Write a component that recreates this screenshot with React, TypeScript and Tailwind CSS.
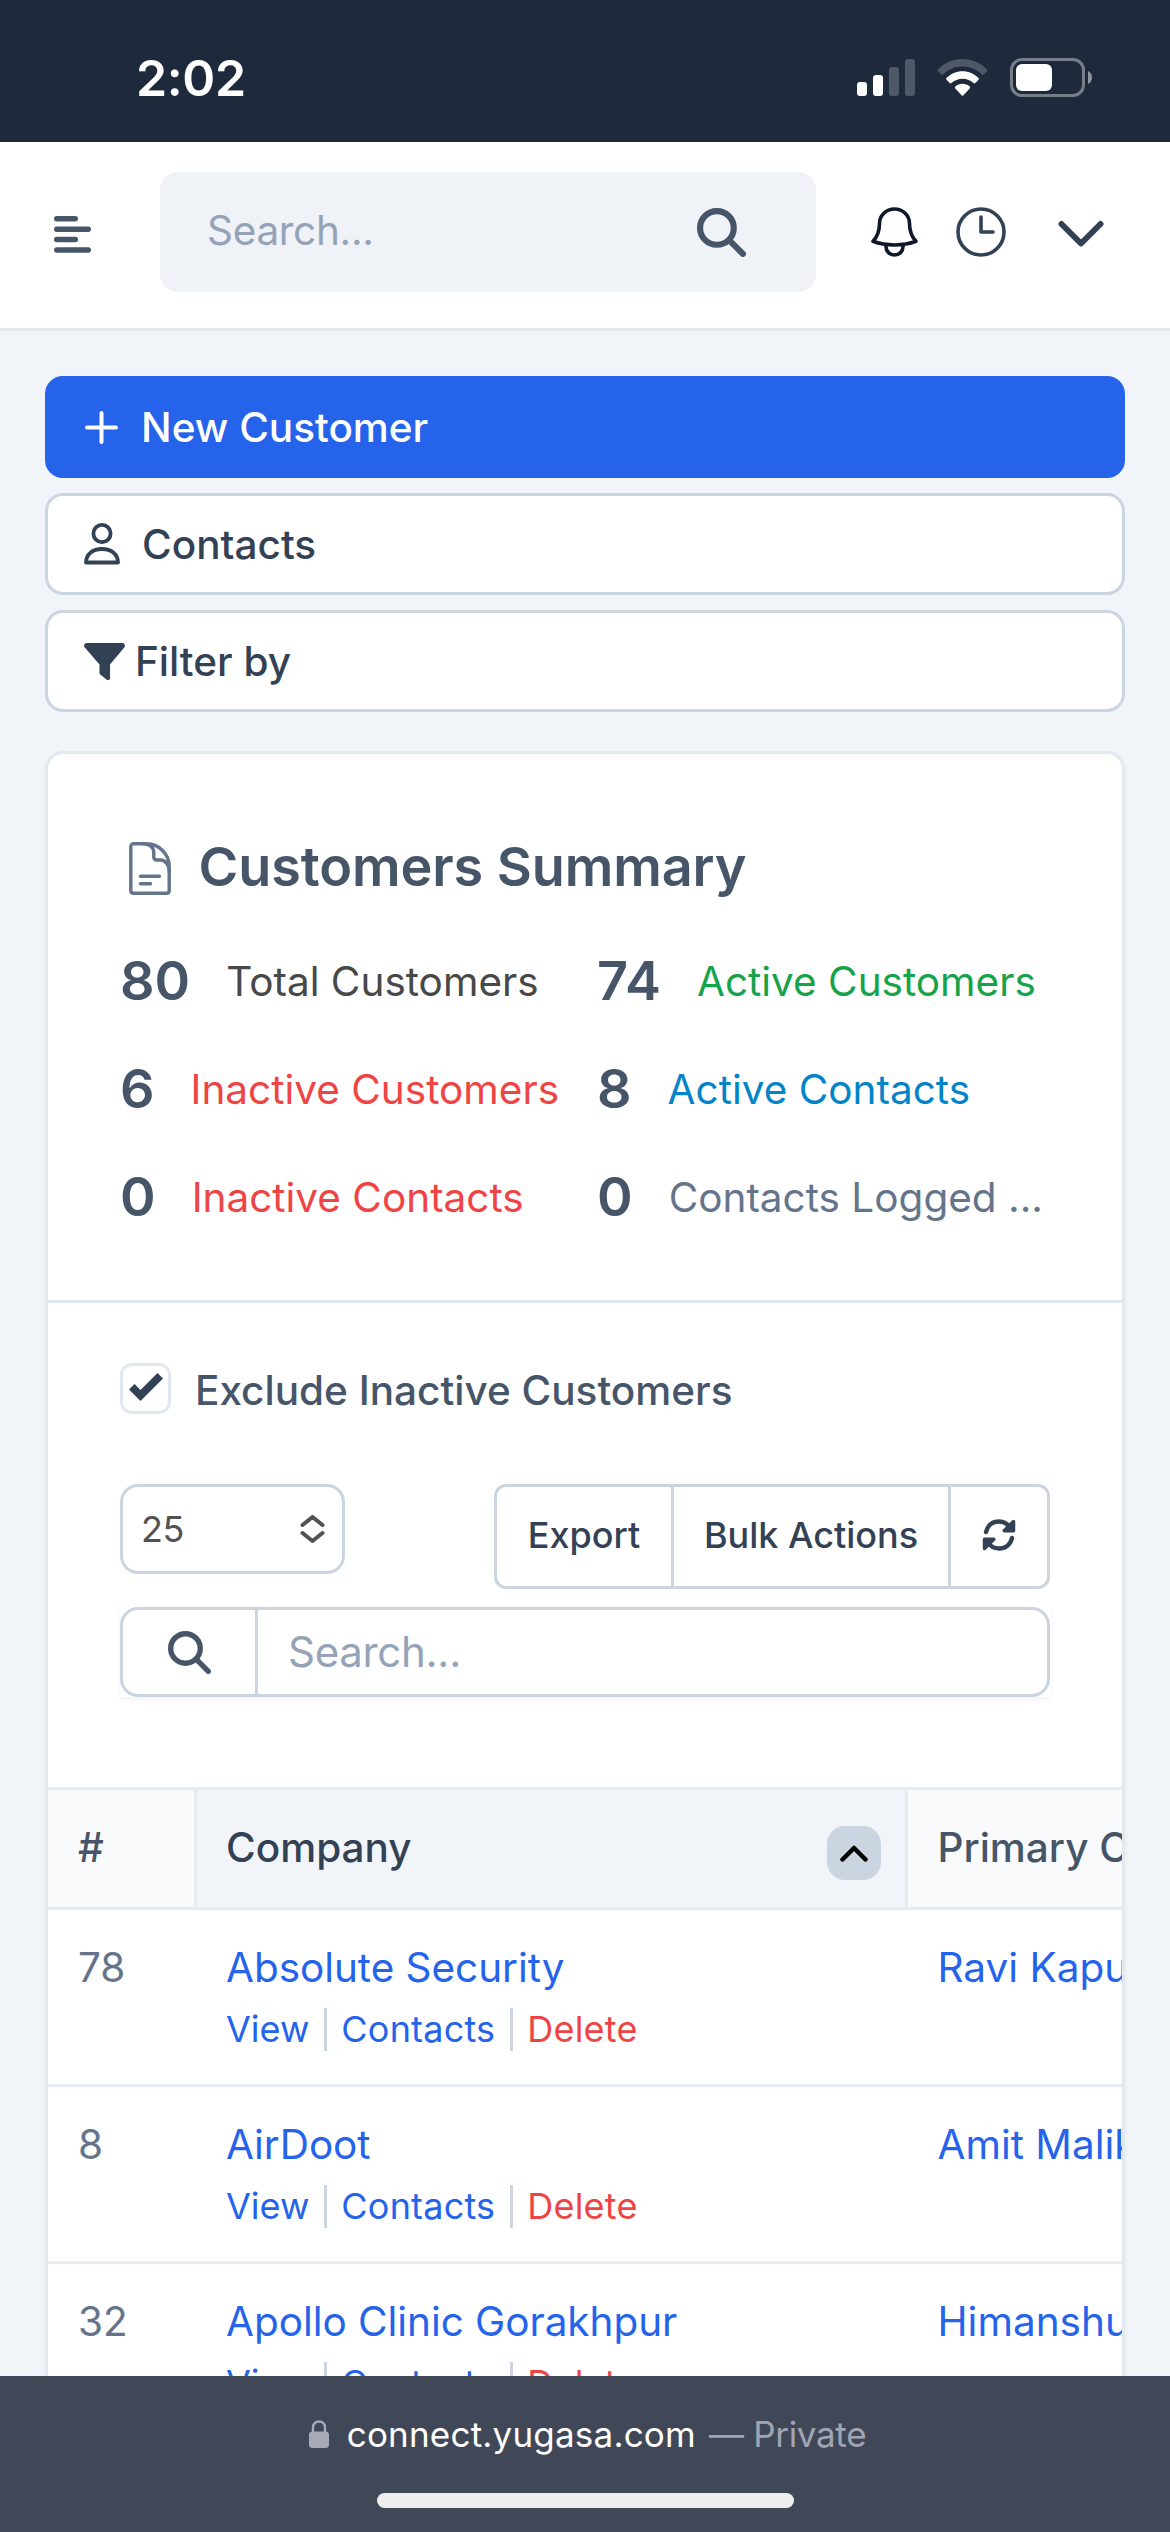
import type { ReactNode } from "react";

const stats = [
  { value: "80", label: "Total Customers", color: "text-[#484848]" },
  { value: "74", label: "Active Customers", color: "text-[#16a34a]" },
  { value: "6", label: "Inactive Customers", color: "text-[#ef4444]" },
  { value: "8", label: "Active Contacts", color: "text-[#0284c7]" },
  { value: "0", label: "Inactive Contacts", color: "text-[#ef4444]" },
  { value: "0", label: "Contacts Logged ...", color: "text-[#64748b]" },
];

const customers = [
  { id: 78, company: "Absolute Security", contact: "Ravi Kapur" },
  { id: 8, company: "AirDoot", contact: "Amit Malik" },
  { id: 32, company: "Apollo Clinic Gorakhpur", contact: "Himanshu Singh" },
];

const SearchIcon = ({ className }: { className: string }) => (
  <svg viewBox="0 0 48 48" fill="none" stroke="currentColor" className={className}>
    <circle cx="19.5" cy="19.5" r="16.5" strokeWidth="6" />
    <path d="M32 32l13 13" strokeWidth="6" strokeLinecap="round" />
  </svg>
);

const StatusBar = () => (
  <div className="flex h-[142px] shrink-0 items-start justify-between bg-[#1e293b] pl-[136px] pr-[78px] text-white">
    <span className="mt-[46px] text-[50px] font-semibold leading-[64px] tracking-[-0.4px]">2:02</span>
    <div className="mt-[58px] flex items-start">
      <svg width="58" height="39" viewBox="0 0 58 39" fill="#fff">
        <rect x="0" y="24" width="10" height="14" rx="3" />
        <rect x="16" y="17" width="10" height="21" rx="3" />
        <rect x="32" y="9" width="10" height="29" rx="3" fillOpacity=".22" />
        <rect x="48" y="1" width="10" height="37" rx="3" fillOpacity=".22" />
      </svg>
      <svg width="51" height="39" viewBox="0 0 51 39" className="ml-[22px]" fill="#fff">
        <path
          d="M1 11.5C7.500 5 16 1 25.500 1S43.500 5 50 11.500c.6.600.6 1.200 0 1.800l-3.200 3.200c-.6.600-1.200.5-1.700 0C39.900 11.500 33 8.500 25.500 8.500S11.100 11.500 5.900 16.500c-.5.500-1.100.6-1.700 0L1 13.300c-.6-.6-.6-1.200 0-1.800z"
          fillOpacity=".22"
        />
        <path d="M9.500 20C13.700 15.900 19.300 13.300 25.500 13.300S37.300 15.900 41.500 20c.6.600.6 1.200 0 1.800l-3.200 3.300c-.5.500-1.200.5-1.700 0C33.700 22.400 29.800 20.800 25.500 20.800s-8.200 1.600-11.100 4.300c-.5.500-1.200.5-1.700 0l-3.200-3.300c-.6-.6-.6-1.200 0-1.800z" />
        <path d="M18.300 28.600c2-1.800 4.500-2.800 7.200-2.800s5.200 1 7.200 2.800c.6.600.6 1.200 0 1.800l-6.300 6.800c-.6.700-1.200.7-1.800 0l-6.300-6.800c-.6-.6-.6-1.200 0-1.800z" />
      </svg>
      <svg width="82" height="39" viewBox="0 0 82 39" className="ml-[22px]" fill="#fff">
        <rect x="1.500" y="1.500" width="72" height="36" rx="10.500" fill="none" stroke="#fff" strokeOpacity=".4" strokeWidth="3" />
        <rect x="6" y="6" width="36" height="27" rx="6" />
        <path d="M78 13c2.400 1 4 3.500 4 6.500s-1.600 5.500-4 6.500z" fillOpacity=".5" />
      </svg>
    </div>
  </div>
);

const TopBar = () => (
  <header className="flex h-[189px] shrink-0 items-start border-b-[3px] border-[#e2e8f0] bg-white pl-[54px]">
    <svg width="37" height="37" viewBox="0 0 37 37" fill="#475569" className="mt-[74px]">
      <rect x="0" y="0" width="24" height="5.500" rx="2.700" />
      <rect x="0" y="10.400" width="37" height="5.500" rx="2.700" />
      <rect x="0" y="20.800" width="24" height="5.500" rx="2.700" />
      <rect x="0" y="31.200" width="37" height="5.500" rx="2.700" />
    </svg>
    <div className="ml-[69px] mt-[30px] flex h-[120px] w-[656px] items-center justify-between rounded-[18px] bg-[#eff2f7] pl-[47px] pr-[70px]">
      <span className="mb-[3px] text-[40.5px] leading-[60px] tracking-[-0.3px] text-[#94a3b8]">Search...</span>
      <SearchIcon className="h-[49px] w-[49px] text-[#475569]" />
    </div>
    <svg
      width="47"
      height="50"
      viewBox="0 0 47 50"
      fill="none"
      stroke="#0f172a"
      strokeWidth="3.600"
      strokeLinejoin="round"
      strokeLinecap="round"
      className="ml-[55px] mt-[65px]"
    >
      <path d="M23.500 2C15 2 8.500 8.600 8.500 16.500c0 7.500-1.500 12.500-6.500 17.800C8.500 36.800 16 38 23.500 38s15-1.200 21.500-3.700c-5-5.300-6.500-10.300-6.500-17.800C38.500 8.600 32 2 23.500 2z" />
      <path d="M15 37.500v2.200c0 4.700 3.800 8.300 8.500 8.300s8.500-3.600 8.500-8.300v-2.200" />
    </svg>
    <svg width="50" height="50" viewBox="0 0 50 50" fill="none" stroke="#334155" strokeWidth="3.600" strokeLinecap="round" strokeLinejoin="round" className="ml-[38px] mt-[65px]">
      <circle cx="25" cy="25" r="23" />
      <path d="M25 10v15h12" />
    </svg>
    <svg width="46" height="28" viewBox="0 0 46 28" fill="none" stroke="#334155" strokeWidth="6" strokeLinecap="round" strokeLinejoin="round" className="ml-[52px] mt-[78px]">
      <path d="M3.500 4L23 23.500 42.500 4" />
    </svg>
  </header>
);

const ActionButton = ({ primary, children }: { primary?: boolean; children: ReactNode }) => (
  <button
    className={`flex h-[102px] w-full items-center rounded-[18px] border-[3px] pl-9 text-[40.5px] font-medium leading-[60px] ${
      primary ? "border-[#2563eb] bg-[#2563eb] text-white" : "border-[#cbd5e1] bg-white text-[#334155]"
    }`}
  >
    {children}
  </button>
);

const Summary = () => (
  <section className="h-[549px] border-b-[3px] border-[#e2e8f0] px-[72px] pt-[72px]">
    <h2 className="flex h-[84px] items-center text-[54px] font-semibold leading-[84px] tracking-[-0.1px] text-[#475569]">
      <svg width="42" height="53" viewBox="0 0 42 53" fill="none" stroke="#64748b" strokeWidth="3.400" strokeLinecap="round" strokeLinejoin="round" className="ml-[9px] mr-[27.5px]">
        <path d="M14 1.800H4.600C3 1.800 1.800 3 1.800 4.600v43.800c0 1.600 1.200 2.800 2.800 2.800h32.800c1.600 0 2.800-1.200 2.800-2.800V26" />
        <path d="M14 1.800h3.500C30 1.800 40.200 12 40.200 24.500V29c0-5.300-3.700-11-8.500-11h-4c-1.600 0-2.900-1.200-2.900-2.800v-4.500C24.800 5.500 20.500 1.800 14 1.800" />
        <path d="M11.500 34.200h19M11.500 41.800h10" />
      </svg>
      <span className="mb-[3px]">Customers Summary</span>
    </h2>
    <div className="mt-[30px] grid grid-cols-2 gap-6">
      {stats.map((s) => (
        <div key={s.label} className="flex h-[84px] items-center whitespace-nowrap">
          <span className="mb-[3px] mr-9 text-[54px] font-semibold leading-[84px] text-[#475569]">{s.value}</span>
          <span className={`text-[40.5px] leading-[60px] ${s.color}`}>{s.label}</span>
        </div>
      ))}
    </div>
  </section>
);

const Toolbar = () => (
  <div className="px-[72px] pt-[60px]">
    <label className="flex h-[51px] items-center">
      <span className="mr-6 flex h-[51px] w-[51px] items-center justify-center rounded-xl border-[3px] border-[#e2e8f0]">
        <svg width="34" height="28" viewBox="0 0 34 28" fill="#334155" className="-mt-[4px]">
          <path d="M28.500 0L34 5.400 11.500 28 0 16.500 5.600 11l5.900 5.900z" />
        </svg>
      </span>
      <span className="mt-[4px] text-[40.5px] font-medium leading-[60px] text-[#475569]">Exclude Inactive Customers</span>
    </label>

    <div className="mt-[70px] flex items-start justify-between text-[36px] leading-[48px]">
      <div className="flex h-[90px] w-[225px] items-center justify-between rounded-[18px] border-[3px] border-[#cbd5e1] pl-[18px] pr-[17px] tracking-[-0.5px] text-neutral-600">
        25
        <svg width="25" height="28" viewBox="0 0 25 28" fill="none" stroke="#525252" strokeWidth="4" strokeLinecap="round" strokeLinejoin="round">
          <path d="M2.500 10l10-8 10 8M2.500 18l10 8 10-8" />
        </svg>
      </div>
      <div className="flex h-[105px] w-[556px] rounded-xl border-[3px] border-[#cbd5e1] font-medium text-[#334155]">
        <button className="w-[177px] border-r-[3px] border-[#cbd5e1] pb-[3px]">Export</button>
        <button className="w-[277px] border-r-[3px] border-[#cbd5e1] pb-[3px]">Bulk Actions</button>
        <button className="flex flex-1 items-center justify-center pb-[3px]">
          <svg width="34" height="32" viewBox="0 0 34 32" fill="none" stroke="#334155" strokeWidth="4.400" strokeLinecap="round">
            <path d="M4 13C5.500 6.500 10.500 2.500 17 2.500c5.500 0 9 2.500 11.500 7" />
            <path d="M31.500 2.500v9.300h-9.300z" fill="#334155" strokeWidth="3.500" strokeLinejoin="round" />
            <path d="M30 19c-1.500 6.500-6.500 10.500-13 10.500-5.500 0-9-2.500-11.500-7" />
            <path d="M2.500 29.500v-9.300h9.300z" fill="#334155" strokeWidth="3.500" strokeLinejoin="round" />
          </svg>
        </button>
      </div>
    </div>

    <div className="mt-[18px] shadow-[0_3px_6px_rgba(0,0,0,0.05)]">
      <div className="flex h-[90px] items-center rounded-[18px] border-[3px] border-[#cbd5e1]">
        <div className="flex h-full w-[135px] items-center justify-center border-r-[3px] border-[#cbd5e1]">
          <SearchIcon className="h-[43px] w-[43px] text-[#475569]" />
        </div>
        <span className="pl-[30px] text-[42px] leading-[60px] tracking-[-0.3px] text-[#94a3b8]">Search...</span>
      </div>
    </div>
  </div>
);

const Separator = () => <span className="mx-[14.5px] h-[43px] w-[3px] bg-[#cbd5e1]" />;

const RowActions = () => (
  <div className="flex h-[43px] items-center text-[36px] leading-[45px]">
    <span className="text-[#2563eb]">View</span>
    <Separator />
    <span className="tracking-[0.2px] text-[#2563eb]">Contacts</span>
    <Separator />
    <span className="tracking-[0.2px] text-[#ef4444]">Delete</span>
  </div>
);

const CustomerTable = () => (
  <div className="mt-[90px] w-full overflow-hidden text-[40.5px] leading-[60px]">
    <div className="flex h-[123px] w-[1400px] border-y-[3px] border-[#e6ebf2] bg-[#f8fafc] font-medium text-[#475569]">
      <div className="w-[149px] border-r-[3px] border-[#e6ebf2] pl-[30px] pt-[28px]">#</div>
      <div className="flex w-[711px] items-start justify-between border-r-[3px] border-[#e6ebf2] bg-[#f1f5f9] pl-[29px] pr-6 pt-[28px] text-[#334155]">
        Company
        <span className="mt-2 flex h-[54px] w-[54px] items-center justify-center rounded-[18px] bg-[#cbd5e1]">
          <svg width="28" height="17" viewBox="0 0 28 17" fill="none" stroke="#000" strokeWidth="4.500" strokeLinecap="round" strokeLinejoin="round">
            <path d="M2.500 14.500L14 3l11.500 11.500" />
          </svg>
        </span>
      </div>
      <div className="pl-[29.5px] pt-[28px]">Primary Contact</div>
    </div>
    {customers.map((c) => (
      <div key={c.id} className="flex h-[177px] w-[1400px] border-b-[3px] border-[#e8edf3] pt-[28px]">
        <div className="w-[149px] pl-[30px] text-[#64748b]">{c.id}</div>
        <div className="w-[711px] pl-[29px]">
          <div className="mb-[10px] tracking-[-0.05px] text-[#2563eb]">{c.company}</div>
          <RowActions />
        </div>
        <div className="pl-[29.5px] text-[#2563eb]">{c.contact}</div>
      </div>
    ))}
  </div>
);

const BrowserBar = () => (
  <footer className="flex h-[156px] shrink-0 flex-col items-center bg-[#404858]">
    <div className="mt-[34px] flex h-[48px] items-center pl-[5px] text-[35px] leading-[48px]">
      <svg width="20" height="28" viewBox="0 0 20 28" fill="#a6aab8" className="mr-[18px]">
        <path d="M4 13V7.500C4 4 6.500 1.500 10 1.500s6 2.500 6 6V13" fill="none" stroke="#a6aab8" strokeWidth="2.400" />
        <rect x="0" y="11.500" width="20" height="16.500" rx="3.500" />
      </svg>
      <span className="tracking-[0.2px] text-white">connect.yugasa.com</span>
      <span className="ml-[13px] tracking-[-0.3px] text-[#a0a5b4]">— Private</span>
    </div>
    <div className="mt-[35px] h-[15px] w-[417px] rounded-full bg-[#eeeeee]" />
  </footer>
);

export default function App() {
  return (
    <div className="flex h-[2532px] w-[1170px] flex-col overflow-hidden bg-[#f1f5f9] font-[Inter,sans-serif]">
      <StatusBar />
      <TopBar />
      <main className="min-h-0 flex-1 overflow-hidden px-[45px] pt-[45px]">
        <div className="flex flex-col gap-[15px]">
          <ActionButton primary>
            <svg width="35" height="35" viewBox="0 0 35 35" stroke="#fff" strokeWidth="4" strokeLinecap="round" className="mr-[22px]">
              <path d="M17.500 3v29M3 17.500h29" />
            </svg>
            <span className="mt-[2px]">New Customer</span>
          </ActionButton>
          <ActionButton>
            <svg width="36" height="42" viewBox="0 0 36 42" fill="none" stroke="#334155" strokeWidth="3.800" strokeLinejoin="round" className="mr-[22px]">
              <circle cx="18" cy="10.500" r="8.600" />
              <path d="M2 39.500C2 31.500 8.500 26 18 26s16 5.500 16 13.500z" />
            </svg>
            <span className="mt-[2px]">Contacts</span>
          </ActionButton>
          <ActionButton>
            <svg width="41" height="37" viewBox="0 0 41 37" fill="#334155" className="mr-[10px]">
              <path d="M2.800 0h35.400c2.400 0 3.600 2.800 2 4.500L26 21.500V35c0 2-2 2.700-3.500 1.500l-6-4.800c-.8-.6-1-1.200-1-2.200v-8L.8 4.500C-.8 2.800.4 0 2.800 0z" />
            </svg>
            <span className="mt-[2px]">Filter by</span>
          </ActionButton>
        </div>
        <div className="mt-[39px] h-[1900px] rounded-[18px] border-[3px] border-[#e2e8f0] bg-white shadow-[0_3px_6px_rgba(0,0,0,0.04)]">
          <Summary />
          <Toolbar />
          <CustomerTable />
        </div>
      </main>
      <BrowserBar />
    </div>
  );
}
